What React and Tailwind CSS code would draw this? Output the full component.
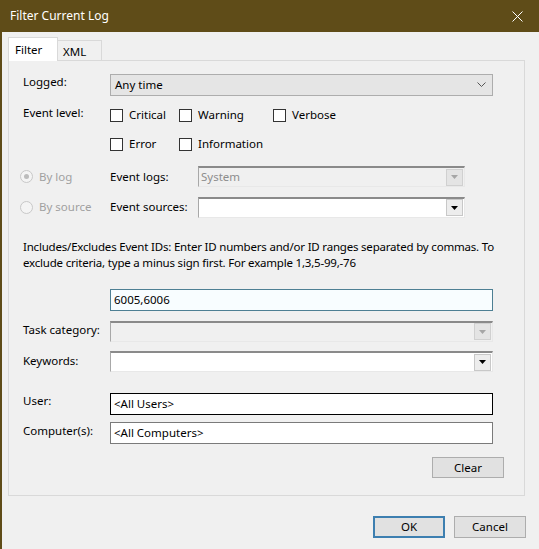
import React from 'react';

const font = { fontFamily: '"Noto Sans", "Open Sans", sans-serif' };

// small checkbox with caption
const Check = ({ label, w }) => (
  <div className={`flex items-center ${w}`}>
    <span className="w-[13px] h-[13px] border border-[#333] bg-white shrink-0" />
    <span className="ml-[6px]">{label}</span>
  </div>
);

const Radio = ({ label, checked }) => (
  <div className="flex items-center -ml-[3px] text-[#a0a0a0]">
    <span className="w-[13px] h-[13px] rounded-full border border-[#c8c8c8] bg-[#f4f4f4] flex items-center justify-center shrink-0">
      {checked && <span className="w-[5px] h-[5px] rounded-full bg-[#bcbcbc]" />}
    </span>
    <span className="ml-[6px]">{label}</span>
  </div>
);

// old style sunken combo with square arrow button
const Combo = ({ value, disabled, w }) => (
  <div
    className={`flex items-center h-[21px] ${w} border-t-2 border-l border-t-[#8a8a8a] border-l-[#a8a8a8] border-b border-r border-b-[#e8e8e8] border-r-[#e8e8e8] ${
      disabled ? 'bg-[#f0f0f0] text-[#8d8d8d]' : 'bg-white'
    }`}
  >
    <span className="flex-1 pl-[2px] leading-none">{value}</span>
    <span
      className={`w-[17px] h-[17px] mr-[1px] flex items-center justify-center border ${
        disabled ? 'border-[#d0d0d0] bg-[#e4e4e4]' : 'border-[#c8c8c8] bg-[#ededed]'
      }`}
    >
      <svg width="7" height="4" viewBox="0 0 7 4">
        <path d="M0 0h7L3.5 4z" fill={disabled ? '#a6a6a6' : '#000'} />
      </svg>
    </span>
  </div>
);

const Row = ({ label, children, className = '' }) => (
  <div className={`flex items-center ${className}`}>
    <div className="w-[87px] shrink-0">{label}</div>
    {children}
  </div>
);

export default function App() {
  return (
    <div style={font} className="w-[539px] h-[549px] bg-[#f0f0f0] border-l-2 border-[#5f4c18] text-[11.5px] text-black overflow-hidden">
      <div className="h-[32px] -ml-[2px] bg-[#5f4c18] flex items-center justify-between pl-[10px] pr-[16px] text-[12px] text-white">
        <span>Filter Current Log</span>
        <svg width="11" height="11" viewBox="0 0 11 11">
          <path d="M0.5 0.5l10 10M10.5 0.5l-10 10" stroke="#fff" strokeWidth="1" />
        </svg>
      </div>

      <div className="pl-[6px] pt-[5px]">
        <div className="flex items-end h-[24px]">
          <div className="relative z-10 h-[24px] w-[50px] bg-white border border-b-0 border-[#d9d9d9] pl-[6px] pt-[3px]">Filter</div>
          <div className="h-[21px] w-[44px] border border-l-0 border-b-0 border-[#d9d9d9] pl-[5px] pt-[2px]">XML</div>
        </div>

        <div className="w-[517px] h-[436px] -mt-[1px] border border-[#d9d9d9] flex flex-col pl-[14px]">
          <Row className="mt-[13px] h-[22px]" label={<span className="-mt-[6px] block">Logged:</span>}>
            <div className="w-[383px] h-[22px] bg-[#e5e5e5] border border-[#adadad] flex items-center justify-between pl-[4px] pr-[6px]">
              <span>Any time</span>
              <svg width="9" height="6" viewBox="0 0 9 6">
                <path d="M0.5 0.5l4 4 4-4" fill="none" stroke="#555" strokeWidth="1" />
              </svg>
            </div>
          </Row>

          <Row className="mt-[11px] h-[16px]" label={<span className="-mt-[5px] block">Event level:</span>}>
            <Check label="Critical" w="w-[69px]" />
            <Check label="Warning" w="w-[94px]" />
            <Check label="Verbose" w="" />
          </Row>

          <Row className="mt-[13px] h-[16px]" label="">
            <Check label="Error" w="w-[69px]" />
            <Check label="Information" w="" />
          </Row>

          <Row className="mt-[14px] h-[21px]" label={<Radio label="By log" checked />}>
            <span className="w-[88px]">Event logs:</span>
            <Combo value="System" disabled w="w-[267px]" />
          </Row>

          <Row className="mt-[9px] h-[22px]" label={<Radio label="By source" />}>
            <span className="w-[88px]">Event sources:</span>
            <Combo value="" w="w-[267px]" />
          </Row>

          <div className="mt-[21px] leading-[16px] whitespace-nowrap tracking-[-0.2px]">
            Includes/Excludes Event IDs: Enter ID numbers and/or ID ranges separated by commas. To
            <br />
            exclude criteria, type a minus sign first. For example 1,3,5-99,-76
          </div>

          <Row className="mt-[18px] h-[22px]" label="">
            <div className="w-[383px] h-[22px] bg-[#f8fdff] border border-[#4d7f93] flex items-center pl-[3px]">6005,6006</div>
          </Row>

          <Row className="mt-[9px] h-[22px]" label={<span className="-mt-[2px] block">Task category:</span>}>
            <Combo value="" disabled w="w-[383px]" />
          </Row>

          <Row className="mt-[8px] h-[23px]" label={<span className="-mt-[2px] block">Keywords:</span>}>
            <Combo value="" w="w-[383px]" />
          </Row>

          <Row className="mt-[20px] h-[22px]" label={<span className="-mt-[7px] block">User:</span>}>
            <div className="w-[383px] h-[22px] bg-white border border-black flex items-center pl-[3px]">&lt;All Users&gt;</div>
          </Row>

          <Row className="mt-[7px] h-[22px]" label={<span className="-mt-[4px] block">Computer(s):</span>}>
            <div className="w-[383px] h-[22px] bg-white border border-[#7a7a7a] flex items-center pl-[3px]">&lt;All Computers&gt;</div>
          </Row>

          <div className="mt-[13px] flex justify-end pr-[20px]">
            <button className="w-[72px] h-[21px] bg-[#e1e1e1] border border-[#adadad] flex items-center justify-center">Clear</button>
          </div>
        </div>

        <div className="flex justify-end gap-[9px] mt-[20px] pr-[13px]">
          <button className="w-[72px] h-[22px] bg-[#e1e1e1] border-2 border-[#3d7fb0] flex items-center justify-center">OK</button>
          <button className="w-[72px] h-[22px] bg-[#e1e1e1] border border-[#adadad] flex items-center justify-center">Cancel</button>
        </div>
      </div>
    </div>
  );
}
